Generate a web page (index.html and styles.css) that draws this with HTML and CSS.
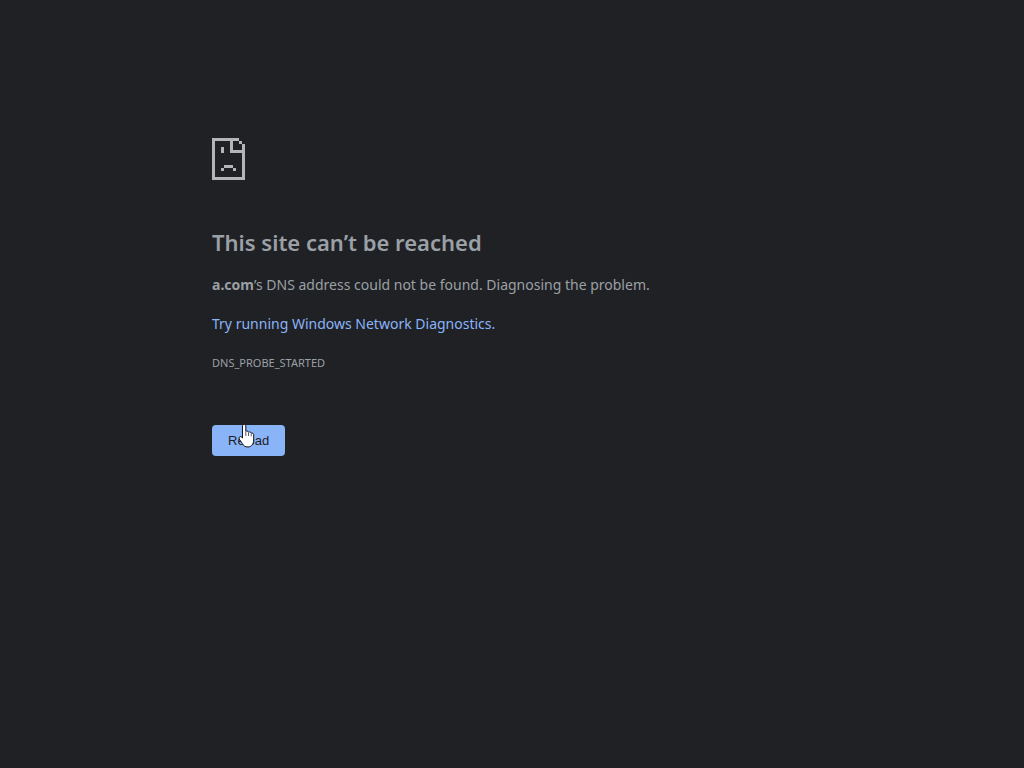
FILE: index.html
```html
<!DOCTYPE html>
<html lang="en">
<head>
  <meta charset="UTF-8">
  <meta name="viewport" content="width=device-width, initial-scale=1.0">
  <title>a.com</title>
  <link rel="stylesheet" href="styles.css">
</head>
<body>
  <main class="error-page">
    <svg class="icon" viewBox="0 0 11 14" shape-rendering="crispEdges" aria-hidden="true">
      <path d="M0 0h9v1H7v3h4v10H0zM1 1v12h9V5H6V1zM9 1h1v1H9zM10 2h1v2h-1zM3 3h1v2H3zM4 9h3v1H4zM3 10h1v1H3zM7 10h1v1H7z" fill-rule="evenodd"/>
    </svg>
    <h1>This site can’t be reached</h1>
    <p class="summary"><strong>a.com</strong>’s DNS address could not be found. Diagnosing the problem.</p>
    <p class="suggestion"><a href="#">Try running Windows Network Diagnostics</a>.</p>
    <p class="error-code">DNS_PROBE_STARTED</p>
    <div class="actions">
      <button class="reload" type="button">Reload</button>
      <svg class="cursor" viewBox="0 0 17 24" aria-hidden="true">
        <path d="M4.500 2C4.500 0 7.800 0 7.800 2V7.500C8.500 6.700 10.200 7 10.500 8.200C11.200 7.500 12.800 7.800 13.200 9.200C14.300 8.700 15.700 9.400 15.700 10.800V16C15.700 19.500 13.500 23 10 23C7 23 5.300 21.500 4.300 19.500L1.200 15C.4 13.500 1.800 12 3.200 12.800L4.500 14z"/>
        <path class="creases" d="M7.800 8v4M10.500 8.600V12M13.200 9.600V12.500"/>
      </svg>
    </div>
  </main>
</body>
</html>
```
FILE: styles.css
```css
* {
  box-sizing: border-box;
}
body {
  margin: 0;
  background-color: #202124;
  color: #9aa0a6;
  font-family: 'Segoe UI', 'Noto Sans', sans-serif;
  font-size: 14px;
  line-height: 24px;
}
.error-page {
  max-width: 600px;
  margin: 0 auto;
  padding-top: 18vh;
}
.icon {
  display: block;
  width: 33px;
  height: 42px;
  fill: #b4b5b6;
}
h1 {
  margin: 48px 0 17px;
  font-size: 22px;
  font-weight: 600;
  line-height: 28px;
}
p {
  margin: 0 0 15px;
}
a {
  color: #8ab4f8;
  text-decoration: none;
}
.suggestion {
  color: #8ab4f8;
}
.error-code {
  font-size: 11px;
}
.actions {
  position: relative;
  margin-top: 50px;
}
.reload {
  display: block;
  padding: 8px 16px;
  border: 0;
  border-radius: 4px;
  background-color: #8ab4f8;
  color: #202124;
  font-family: 'Liberation Sans', sans-serif;
  font-size: 13px;
  line-height: 15px;
  cursor: pointer;
}
/* hand pointer hovering over the button */
.cursor {
  position: absolute;
  top: -1px;
  left: 26px;
  width: 17px;
  height: 24px;
  fill: #fff;
  stroke: #10131c;
  pointer-events: none;
}
.creases {
  stroke: #555c6b;
}
```
